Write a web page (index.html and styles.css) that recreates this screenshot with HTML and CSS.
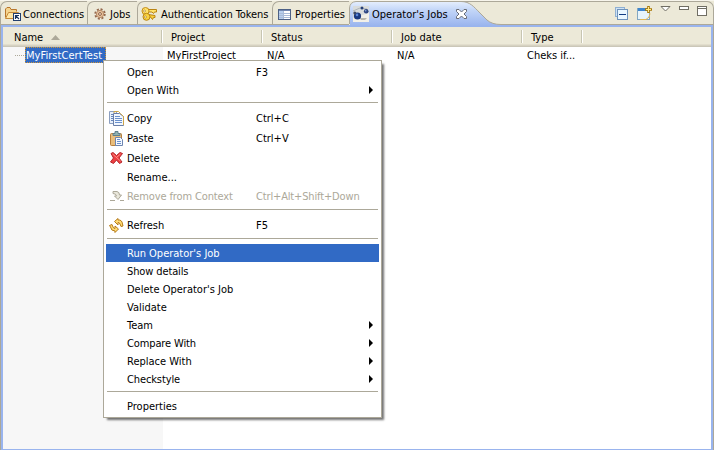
FILE: index.html
```html
<!DOCTYPE html>
<html lang="en">
<head>
<meta charset="utf-8">
<title>Operator's Jobs</title>
<link rel="stylesheet" href="styles.css">
</head>
<body>
<div class="view">
  <div class="tabbar">
    <div class="tab t-conn">
      <svg class="ic" width="16" height="14" viewBox="0 0 16 14"><path d="M.5 10.500V2l1.500-1.500h3l1 2h5.500v2" fill="#f5d48e" stroke="#b8762c"/><path d="M.5 11.500l3-6h10l-2.500 6z" fill="#ffe6a4" stroke="#c58a3a"/><rect x="8.500" y="6.500" width="7" height="7" fill="#fff" stroke="#22406f"/><path d="M10.500 12V8.500H14M10.500 8.500l3.500 3.500" stroke="#17335f" stroke-width="1.200" fill="none"/></svg>
      <span class="lb">Connections</span>
    </div>
    <div class="tab t-jobs">
      <svg class="ic" width="12" height="12" viewBox="0 0 12 12"><circle cx="6" cy="6" r="4.700" fill="none" stroke="#93684d" stroke-width="2" stroke-dasharray="2 1.690"/><circle cx="6" cy="6" r="3.600" fill="#e8c5a0" stroke="#b98a66"/><circle cx="6" cy="6" r="1.400" fill="#fff5e6" stroke="#8c5a3c"/></svg>
      <span class="lb">Jobs</span>
    </div>
    <div class="tab t-auth">
      <svg class="ic" width="17" height="14" viewBox="0 0 17 14"><path d="M7 7.500l7 1v2h-1.500l-1 2-2-2.500-4 1z" fill="#f8cf3b" stroke="#b98312"/><path d="M5 2.500h10.500v2.500h-2l-1 1.500-1.500-1.500H6z" fill="#ffe36a" stroke="#b98312"/><circle cx="4.500" cy="4" r="3.500" fill="#ffe36a" stroke="#c28b18"/><circle cx="5.500" cy="9.800" r="3.500" fill="#f9d341" stroke="#b98312"/><circle cx="3.500" cy="4" r="1" fill="#fff" stroke="#a87415" stroke-width=".6"/><circle cx="4.500" cy="10" r="1" fill="#fff" stroke="#a87415" stroke-width=".6"/></svg>
      <span class="lb">Authentication Tokens</span>
    </div>
    <div class="tab t-prop">
      <svg class="ic" width="13" height="11" viewBox="0 0 13 11" shape-rendering="crispEdges"><rect x=".5" y=".5" width="12" height="10" fill="#fff" stroke="#4d6185"/><path d="M1 1h11v1H1z" fill="#7187b0"/><path d="M1 2h4v8H1z" fill="#b8d0ee"/><path d="M1 4.500h11M1 6.500h11M1 8.500h11M5.500 2v8" stroke="#a9bbd8"/></svg>
      <span class="lb">Properties</span>
    </div>
    <div class="tab t-active">
      <svg class="shape" width="156" height="26" viewBox="0 0 156 26">
        <defs><linearGradient id="blue" x1="0" y1="0" x2="0" y2="1"><stop offset="0" stop-color="#e6effd"/><stop offset=".35" stop-color="#c3d6f8"/><stop offset="1" stop-color="#99b4ee"/></linearGradient></defs>
        <path d="M1 26V7Q1 2 7 1.500H112C121 1.500 125 7 131 13L138 20Q143 24.500 152 24.500V26z" fill="url(#blue)"/>
        <path d="M.5 24V8Q1 2 7 1.500H112C121 1.500 125 7 131 13L138 20Q143 24.500 152 24.500H156M112 1.500H156" fill="none" stroke="#aca899"/>
      </svg>
      <svg class="ic" width="16" height="16" viewBox="0 0 16 16"><rect width="16" height="16" fill="#d9dcdc"/><path d="M0 12l16-5v9H0z" fill="#f2f0e8"/><path d="M7 12h7l-2 2H8z" fill="#b9b6ac"/><path d="M0 5l7-3 7 1" stroke="#aeb4b9" fill="none"/><circle cx="4.500" cy="10" r="3.600" fill="#19387f"/><circle cx="4" cy="8.900" r="1.300" fill="#5b86d6"/><circle cx="13.200" cy="5.300" r="2.300" fill="#2d4580"/><circle cx="12.700" cy="4.700" r=".8" fill="#8ba9dd"/><circle cx="9" cy="2" r="1.500" fill="#243f78"/><circle cx="1.800" cy="7" r="1.500" fill="#3c4965"/></svg>
      <span class="lb">Operator's Jobs</span>
      <svg class="close" width="11" height="10" viewBox="0 0 11 10"><path d="M.5.500h2.500L5.500 3 8 .500h2.500v2L8 5l2.500 2.500v2H8L5.500 7 3 9.500H.500v-2L3 5 .500 2.500z" fill="#fff" stroke="#696d78"/></svg>
    </div>
    <div class="tools">
      <svg class="collapse" width="13" height="13" viewBox="0 0 13 13" shape-rendering="crispEdges"><rect x=".5" y=".5" width="9" height="9" fill="#cfe2f5" stroke="#8fb0d2"/><rect x="2.500" y="2.500" width="10" height="10" fill="#eaf7ff" stroke="#6f93bb"/><path d="M4 7.500h7" stroke="#123c83"/></svg>
      <svg class="newwin" width="15" height="14" viewBox="0 0 15 14"><rect x=".5" y="2.500" width="12" height="11" fill="#e7f4fb" stroke="#83a7c2"/><path d="M1 2h9v3H1z" fill="#3f86ce"/><path d="M3 13.500h6q4-2 4-6" fill="none" stroke="#e0b554"/><path d="M11.500 0v7M8 3.500h7" stroke="#a87808" stroke-width="2.600"/><path d="M11.500 1v5M9 3.500h5" stroke="#ffe987"/></svg>
      <svg class="down" width="11" height="6" viewBox="0 0 11 6"><path d="M1 .500h9L5.500 5z" fill="#fff" stroke="#706e64"/></svg>
      <svg class="min" width="10" height="4" viewBox="0 0 10 4"><rect x=".5" y=".5" width="9" height="3" fill="#fff" stroke="#706e64"/></svg>
      <svg class="max" width="10" height="10" viewBox="0 0 10 10"><rect x=".5" y=".5" width="9" height="9" fill="#fff" stroke="#706e64"/><path d="M0 2.500h10" stroke="#706e64"/></svg>
    </div>
  </div>
  <div class="frame">
    <div class="head">
      <div class="col c1"><span class="lb">Name</span><svg width="9" height="5" viewBox="0 0 9 5"><path d="M0 5L4.500 0 9 5z" fill="#aca899"/></svg></div>
      <div class="col c2"><span class="lb">Project</span></div>
      <div class="col c3"><span class="lb">Status</span></div>
      <div class="col c4"><span class="lb">Job date</span></div>
      <div class="col c5"><span class="lb">Type</span></div>
    </div>
    <div class="rows">
      <div class="cell c1"><i class="dots"></i><span class="sel"><span class="lb">MyFirstCertTest</span></span></div>
      <div class="cell c2"><span class="lb">MyFirstProject</span></div>
      <div class="cell c3"><span class="lb">N/A</span></div>
      <div class="cell c4"><span class="lb">N/A</span></div>
      <div class="cell c5"><span class="lb">Cheks if...</span></div>
    </div>
  </div>
</div>

<div class="menu">
  <div class="item"><b></b><span>Open</span><kbd>F3</kbd></div>
  <div class="item"><b></b><span>Open With</span><i class="arrow"></i></div>
  <hr>
  <div class="item tall"><b><svg width="15" height="15" viewBox="0 0 15 15"><path d="M.5.500h6l2 2v10h-8z" fill="#e8f0fb" stroke="#8c9fc0"/><path d="M2 3.500h3M2 5.500h3M2 7.500h3M2 9.500h3" stroke="#6686bd"/><path d="M4.500 2.500h6l4 3v9h-10z" fill="#f2f7ff" stroke="#6b7fa8"/><path d="M5 2V.500h4.500l2 2 3 3V14" fill="none" stroke="#cda548"/><path d="M6 5.500h5M6 7.500h7M6 9.500h7M6 11.500h7" stroke="#6b91cd"/></svg></b><span>Copy</span><kbd>Ctrl+C</kbd></div>
  <div class="item tall"><b><svg width="13" height="15" viewBox="0 0 13 15"><rect x=".5" y="2.500" width="11" height="12" rx="1" fill="#e9bd7c" stroke="#b67e3c"/><path d="M3 4.500v-2h2v-2h3v2h2v2z" fill="#91b2b2" stroke="#5e7f8c"/><path d="M5.500 6.500h5l2 2v6h-7z" fill="#f5f9ff" stroke="#6d85b1"/><path d="M7 8.500h3M7 10.500h4M7 12.500h4" stroke="#6b91cd"/></svg></b><span>Paste</span><kbd>Ctrl+V</kbd></div>
  <div class="item tall"><b><svg width="13" height="12" viewBox="0 0 13 12"><path d="M1 1.500L3 .500l3.500 3 3.500-3 2.500 1-3.500 4.500 3 4-2.500 1.500-3-3.500-3 3.500L.500 10l3-4z" fill="#ed3f42" stroke="#b5272c"/><path d="M2.500 2l8 7M10.500 2L7 5" stroke="#ff8b84" fill="none"/></svg></b><span>Delete</span></div>
  <div class="item"><b></b><span>Rename...</span></div>
  <div class="item tall off"><b><svg width="14" height="10" viewBox="0 0 14 10"><path d="M0 9.500h5M10 9.500h4M3 .500h4Q9.500 1 9.500 4h2L8 8.500 4.500 5h2Q6 2.500 3 2.500z" fill="#e9e7db" stroke="#aca899"/></svg></b><span class="long">Remove from Context</span><kbd>Ctrl+Alt+Shift+Down</kbd></div>
  <hr>
  <div class="item tall"><b><svg width="15" height="15" viewBox="0 0 15 15"><path d="M5.500 3.500L9 .500l0 1.500Q13 1.500 13.500 6L14 8l-2 .500L11 6Q10.500 4.500 9 4.500V7z" fill="#ffdc75" stroke="#b67b18"/><path d="M9.500 11L6 14.500V13Q2 13 1.500 9L.500 7.500 3 6.500 4 9Q4.500 10.500 6 10.500V8z" fill="#ffdc75" stroke="#b67b18"/></svg></b><span>Refresh</span><kbd>F5</kbd></div>
  <hr>
  <div class="item hot"><b></b><span>Run Operator's Job</span></div>
  <div class="item"><b></b><span class="long">Show details</span></div>
  <div class="item"><b></b><span>Delete Operator's Job</span></div>
  <div class="item"><b></b><span>Validate</span></div>
  <div class="item"><b></b><span>Team</span><i class="arrow"></i></div>
  <div class="item"><b></b><span class="long">Compare With</span><i class="arrow"></i></div>
  <div class="item"><b></b><span>Replace With</span><i class="arrow"></i></div>
  <div class="item"><b></b><span class="long">Checkstyle</span><i class="arrow"></i></div>
  <hr>
  <div class="item"><b></b><span>Properties</span></div>
</div>
</body>
</html>
```
FILE: styles.css
```css
* { box-sizing: border-box; }
body {
  margin: 0;
  width: 714px;
  height: 450px;
  overflow: hidden;
  background: #ece9d8;
  font: 11px/18px "DejaVu Sans Condensed", "DejaVu Sans", sans-serif;
  font-stretch: condensed;
  color: #000;
  white-space: nowrap;
}
svg { display: block; flex: none; }
.view { height: 450px; display: flex; flex-direction: column; }

/* tab strip */
.tabbar {
  height: 25px;
  flex: none;
  display: flex;
  padding-top: 1px;
  background: linear-gradient(#f7f5ec 1px, transparent 1px);
  position: relative;
}
.tab {
  display: flex;
  align-items: center;
  height: 24px;
  padding-top: 2px;
  border: 1px solid #aca899;
  border-right: 0;
  border-top-left-radius: 7px;
}
.tab .lb { padding-top: 1px; }
.t-conn { width: 87px; padding-left: 4px; }
.t-conn .lb { margin-left: 2px; }
.t-jobs { width: 50px; padding-left: 6px; }
.t-jobs .lb { margin-left: 4px; }
.t-auth { width: 135px; padding-left: 3px; }
.t-auth .lb { margin-left: 3px; letter-spacing: -.07px; }
.t-prop { width: 77px; padding-left: 5px; }
.t-prop .lb { margin-left: 4px; }
.t-active { width: 156px; position: relative; padding-left: 3px; border-color: transparent; }
.t-active .shape { position: absolute; left: -1px; top: -2px; z-index: 0; }
.t-active .ic, .t-active .lb, .t-active .close { position: relative; }
.t-active .lb { margin-left: 3px; }
.t-active .close { margin-left: 8px; }
.tools {
  flex: 1;
  display: flex;
  align-items: flex-start;
  border-top: 1px solid #aca899;
  border-bottom: 1px solid #aca899;
  border-right: 1px solid #aca899;
  border-top-right-radius: 7px;
  padding: 4px 6px 0 0;
  justify-content: flex-end;
}
.tools .collapse { margin: 1px 9px 0 0; }
.tools .newwin { margin-right: 8px; }
.tools .down { margin-right: 8px; }
.tools .min { margin-right: 8px; }

/* table */
.frame {
  flex: 1;
  display: flex;
  flex-direction: column;
  border: solid #99b4ee;
  border-width: 2px 2px 1px 2px;
  margin: 0 1px 0 1px;
  box-shadow: -1px 0 #aca899, 1px 0 #aca899;
  background: #fff;
}
.head {
  display: flex;
  height: 20px;
  flex: none;
  background: linear-gradient(#ece9d8 17px, #e2decd 17px 18px, #d6d2c2 18px 19px, #cbc7b8 19px);
}
.col { display: flex; align-items: center; height: 20px; padding-top: 1px; padding-left: 8px; position: relative; }
.col::after {
  content: "";
  position: absolute;
  right: 0;
  top: 3px;
  width: 2px;
  height: 13px;
  background: linear-gradient(90deg, #c7c5b2 50%, #fff 50%);
}
.c1 { width: 160px; }
.c2 { width: 100px; }
.c3 { width: 130px; }
.c4 { width: 130px; }
.c5 { width: 60px; }
.col.c1 { padding-left: 11px; }
.col.c1 svg { margin-left: 8px; }
.rows { flex: 1; display: flex; }
.cell { padding-left: 4px; }
.cell.c1 { background: #f7f7f7; display: flex; align-items: flex-start; padding-left: 12px; }
.dots { width: 10px; height: 1px; margin-top: 8px; background: repeating-linear-gradient(90deg, #aca899 0 1px, transparent 1px 2px); }
.sel {
  width: 81px;
  height: 16px;
  line-height: 16px;
  padding-left: 0;
  color: #fff;
  background: #316ac5;
  border: 1px dotted #ce953a;
}
.sel .lb { letter-spacing: .05px; }

/* context menu */
.menu {
  position: absolute;
  left: 103px;
  top: 60px;
  width: 279px;
  height: 358px;
  padding: 2px;
  background: #fff;
  border: 1px solid #aca899;
  box-shadow: 3px 3px 2px -1px rgba(0, 0, 0, .55);
}
.item { display: flex; align-items: center; height: 18px; line-height: 18px; }
.tall { height: 20px; line-height: 20px; }
.item b { width: 21px; display: flex; justify-content: center; flex: none; }
.item span { width: 129px; padding-top: 1px; }
.item kbd { font: inherit; padding-top: 1px; }
.item .long { letter-spacing: -.12px; }
.off { color: #aca899; }
.off kbd { letter-spacing: -.15px; }
.hot { background: #316ac5; color: #fff; }
.arrow {
  margin-left: 113px;
  border: solid transparent;
  border-width: 4px 0 4px 4px;
  border-left-color: #000;
}
hr { margin: 3px 1px 5px; height: 1px; border: 0; background: #aca899; }
```
